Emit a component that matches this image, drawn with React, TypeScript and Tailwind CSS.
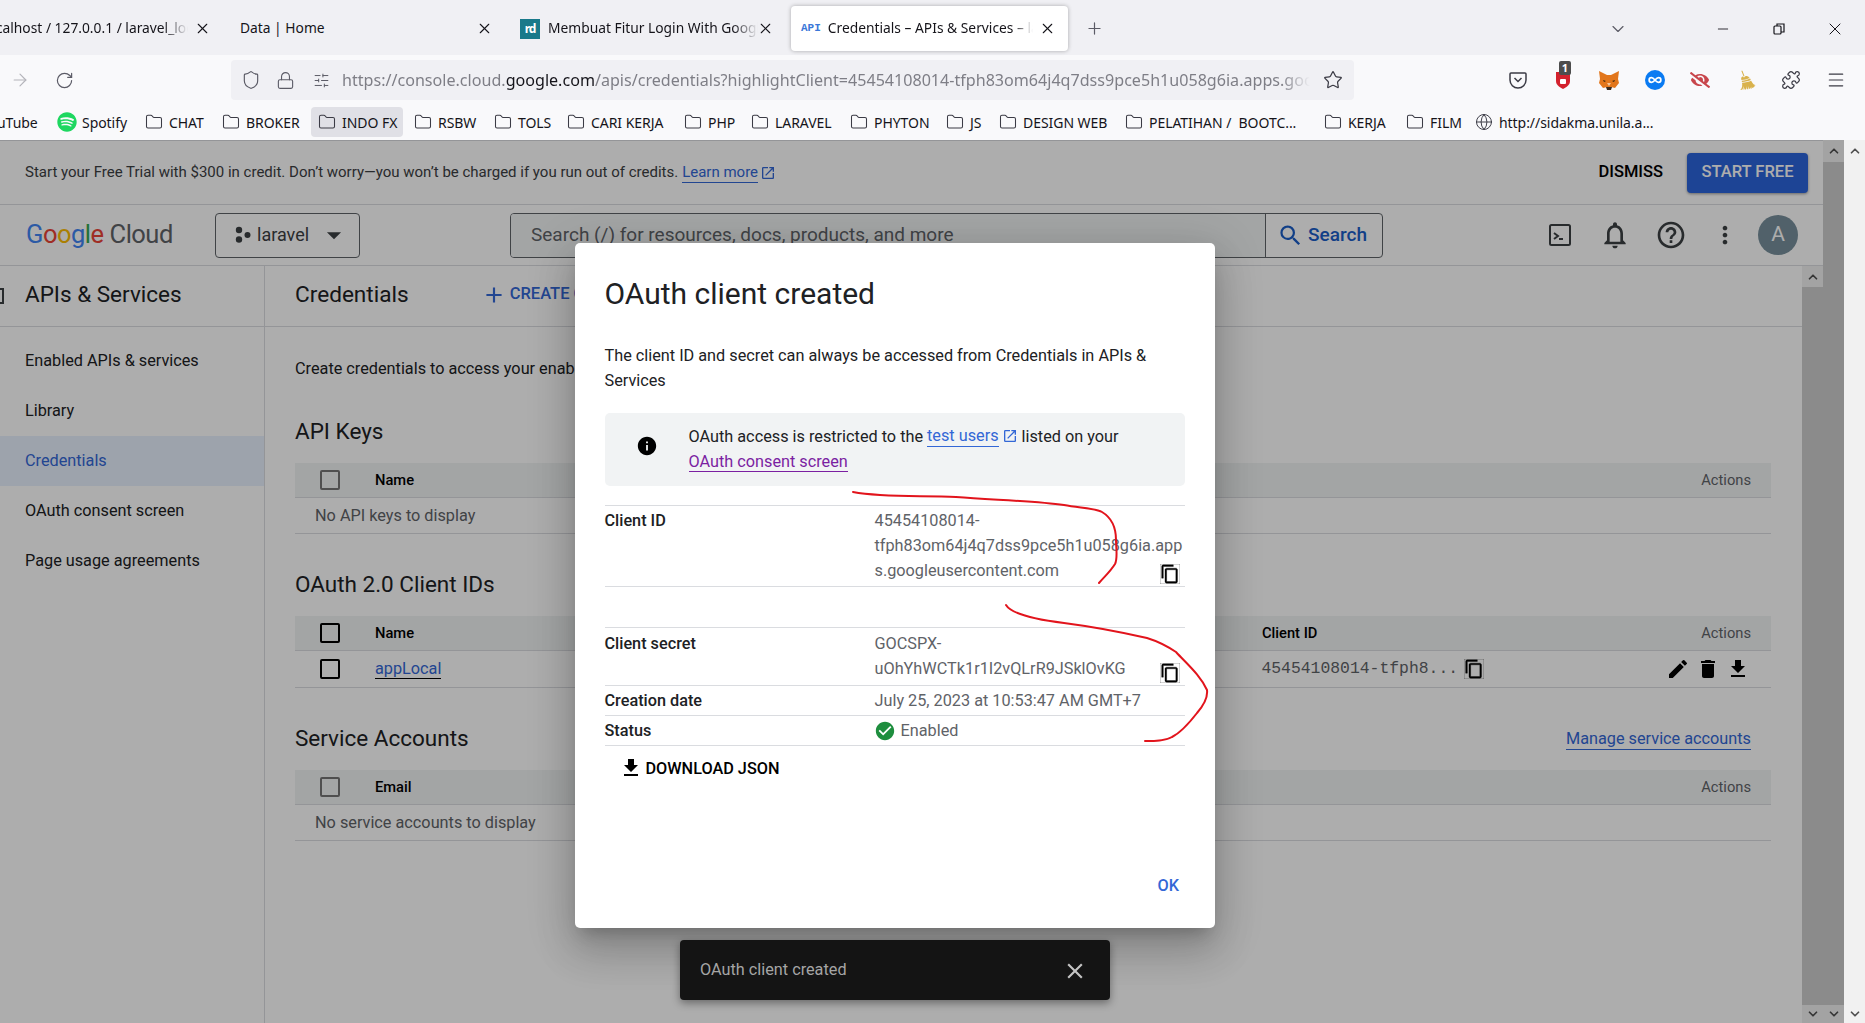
import React from 'react';
import {
  ArrowRight, ChevronDown, ChevronUp, Folder, Globe, Infinity as InfinityIcon, Lock, Menu, Minus, Plus, Puzzle,
  RotateCw, Shield, SlidersHorizontal, Star, X,
} from 'lucide-react';
import { FaSpotify, FaEyeSlash } from 'react-icons/fa';
import { GiBroom } from 'react-icons/gi';
import {
  MdAdd, MdArrowDropDown, MdCheckCircle, MdClose, MdContentCopy, MdDelete, MdEdit, MdFileDownload, MdHelpOutline,
  MdInfo, MdMoreVert, MdNotificationsNone, MdOpenInNew, MdSearch,
} from 'react-icons/md';

const bookmarks = [
  { name: 'CHAT', w: 77 },
  { name: 'BROKER', w: 89 },
  { name: 'INDO FX', w: 103, active: true },
  { name: 'RSBW', w: 80 },
  { name: 'TOLS', w: 73 },
  { name: 'CARI KERJA', w: 117 },
  { name: 'PHP', w: 67 },
  { name: 'LARAVEL', w: 99 },
  { name: 'PHYTON', w: 96 },
  { name: 'JS', w: 53 },
  { name: 'DESIGN WEB', w: 126 },
  { name: 'PELATIHAN /  BOOTC...', w: 199 },
  { name: 'KERJA', w: 82 },
  { name: 'FILM', w: 69 },
];

const sideItems = ['Enabled APIs & services', 'Library', 'Credentials', 'OAuth consent screen', 'Page usage agreements'];

const Tab: React.FC<{ w: number; close: number; children: React.ReactNode }> = ({ w, close, children }) => (
  <div className="relative flex h-[45px] shrink-0 items-center overflow-hidden" style={{ width: w }}>
    {children}
    <X className="absolute h-[17px] w-[17px] text-[#15141a]" style={{ left: close }} strokeWidth={1.5} />
  </div>
);

const Checkbox: React.FC<{ muted?: boolean }> = ({ muted }) => (
  <span className={`block h-5 w-5 rounded-[2px] border-2 ${muted ? 'border-[#757575]' : 'border-black'}`} />
);

const TableHead: React.FC<{ first: string; muted?: boolean; clientId?: boolean }> = ({ first, muted, clientId }) => (
  <div className="flex h-[35px] items-center border-b border-[#dadce0] bg-[#f1f3f4] pr-5 text-[14.7px] font-medium text-black">
    <span className="ml-[25px] mr-[35px]"><Checkbox muted={muted} /></span>
    <span>{first}</span>
    {clientId && <span className="ml-[848px]">Client ID</span>}
    <span className="ml-auto font-normal text-[#5f6368]">Actions</span>
  </div>
);

const Heading: React.FC<{ children: React.ReactNode }> = ({ children }) => (
  <h2 className="h-[30px] text-[22.5px] leading-[28px] text-[#202124]">{children}</h2>
);

const Row: React.FC<{ label: string; children: React.ReactNode; className?: string }> = ({ label, children, className }) => (
  <div className={`grid grid-cols-[270px_minmax(0,1fr)] border-t border-[#dadce0] ${className}`}>
    <div className="font-medium text-[#202124]">{label}</div>
    <div className="relative whitespace-nowrap text-[#5f6368]">{children}</div>
  </div>
);

const CopyBtn = () => <MdContentCopy className="absolute right-[5px] bottom-[2px] h-[20px] w-[20px] stroke-[0.4] text-black" />;

export default function App() {
  return (
    <div className="relative flex h-[1023px] w-[1865px] flex-col overflow-hidden bg-white font-['Roboto',sans-serif]">
      {/* browser tabs */}
      <div className="flex h-[55px] shrink-0 items-center bg-[#f0f0f4] pt-[2px] font-['Noto_Sans',sans-serif] text-[13.8px] text-[#15141a]">
        <Tab w={221} close={194}>
          <span className="ml-[-16px] w-[204px] overflow-hidden whitespace-nowrap [mask-image:linear-gradient(to_right,black_88%,transparent)]">localhost / 127.0.0.1 / laravel_login</span>
        </Tab>
        <Tab w={285} close={255}>
          <span className="ml-[19px]">Data | Home</span>
        </Tab>
        <Tab w={285} close={251}>
          <span className="ml-[14px] flex h-5 w-5 shrink-0 items-center justify-center bg-[#19798a] text-[12px] font-bold tracking-[-1px] text-white">rd</span>
          <span className="ml-2 w-[210px] overflow-hidden whitespace-nowrap [mask-image:linear-gradient(to_right,black_88%,transparent)]">Membuat Fitur Login With Google</span>
        </Tab>
        <div className="relative flex h-[45px] w-[277px] shrink-0 items-center overflow-hidden rounded-[4px] bg-white shadow-[0_0_4px_rgba(0,0,0,0.3)]">
          <span className="ml-[10px] font-['Liberation_Mono',monospace] text-[11px] font-bold text-[#3b78d8]">API</span>
          <span className="ml-[7px] w-[205px] overflow-hidden whitespace-nowrap [mask-image:linear-gradient(to_right,black_90%,transparent)]">Credentials – APIs &amp; Services – laravel</span>
          <X className="absolute left-[248px] h-[17px] w-[17px]" strokeWidth={1.5} />
        </div>
        <Plus className="ml-[17px] h-[19px] w-[19px] text-[#5b5b66]" strokeWidth={1.5} />
        <ChevronDown className="ml-[504px] h-[20px] w-[20px] text-[#5b5b66]" strokeWidth={1.4} />
        <Minus className="ml-[87px] h-[16px] w-[16px]" strokeWidth={1.3} />
        <svg className="ml-[40px] h-4 w-4" viewBox="0 0 16 16" fill="none" stroke="#15141a" strokeWidth="1.2">
          <rect x="3" y="5" width="7" height="8" rx="1" />
          <path d="M6 5V3h7v8h-3" />
        </svg>
        <X className="ml-[38px] h-[20px] w-[20px]" strokeWidth={1.2} />
      </div>

      {/* address bar */}
      <div className="flex h-[50px] shrink-0 items-center bg-[#f9f9fb] font-['Noto_Sans',sans-serif] text-[#5b5b66]">
        <ArrowRight className="ml-[10px] h-5 w-5 text-[#b4b4ba]" strokeWidth={1.4} />
        <RotateCw className="ml-[25px] h-[19px] w-[19px]" strokeWidth={1.5} />
        <div className="ml-[157px] flex h-[40px] w-[1123px] items-center rounded-[4px] bg-[#f0f0f4]">
          <Shield className="ml-[10px] h-[20px] w-[20px]" strokeWidth={1.4} />
          <Lock className="ml-[15px] h-[19px] w-[19px]" strokeWidth={1.4} />
          <SlidersHorizontal className="ml-[18px] h-[17px] w-[17px]" strokeWidth={1.4} />
          <div className="ml-[12px] w-[968px] overflow-hidden whitespace-nowrap pt-[1px] text-[16.1px] text-[#7e7e86] [mask-image:linear-gradient(to_right,black_97%,transparent)]">
            https://console.cloud.<span className="text-[#15141a]">google.com</span>/apis/credentials?highlightClient=45454108014-tfph83om64j4q7dss9pce5h1u058g6ia.apps.googleusercontent.com
          </div>
          <Star className="ml-[13px] h-[20px] w-[20px] text-[#3b3b45]" strokeWidth={1.5} />
        </div>
        <div className="ml-[154px] flex items-center gap-[25px]">
          <svg className="h-5 w-5" viewBox="0 0 20 20" fill="none" stroke="#3b3b45" strokeWidth="1.5">
            <path d="M3 3h14a1 1 0 0 1 1 1v6a8 8 0 0 1-16 0V4a1 1 0 0 1 1-1z" />
            <path d="M6.5 8l3.5 3.5L13.500 8" />
          </svg>
          <div className="relative h-5 w-5">
            <svg className="h-5 w-5" viewBox="0 0 20 20">
              <path d="M3 2h14v9c0 4-3.500 6-7 8-3.500-2-7-4-7-8z" fill="#d3212d" />
              <rect x="7" y="9" width="6" height="5" rx="1" fill="#fff" />
            </svg>
            <span className="absolute left-[6px] top-[-9px] flex h-[14px] w-[12px] items-center justify-center rounded-[2px] bg-[#4d4d4d] text-[11px] font-bold text-white">1</span>
          </div>
          <svg className="h-[22px] w-[22px]" viewBox="0 0 22 22">
            <path d="M1 2l8 4h4l8-4-1 8 1 4-4 5-4-1h-4l-4 1-4-5 1-4z" fill="#e2761b" />
            <path d="M8 18h6l-1 3H9z" fill="#3a2a1c" />
            <path d="M5 11l3 1-2 1zM17 11l-3 1 2 1z" fill="#33230f" />
            <path d="M9 14h4l-2 3z" fill="#f6c79a" />
          </svg>
          <span className="flex h-5 w-5 items-center justify-center rounded-full bg-[#0b7bf2]">
            <InfinityIcon className="h-[14px] w-[14px] text-white" strokeWidth={3} />
          </span>
          <FaEyeSlash className="h-5 w-5 text-[#c8464c]" />
          <GiBroom className="h-[21px] w-[21px] text-[#d9b24c]" />
          <Puzzle className="h-5 w-5 text-[#3b3b45]" strokeWidth={1.5} />
          <Menu className="h-5 w-5 text-[#3b3b45]" strokeWidth={1.4} />
        </div>
      </div>

      {/* bookmarks */}
      <div className="flex h-[35px] shrink-0 items-center overflow-hidden bg-[#f9f9fb] pb-[1px] font-['Noto_Sans',sans-serif] text-[14px] tracking-[-0.05px] text-[#15141a]">
        <span className="ml-[-3px] w-[60px] shrink-0">uTube</span>
        <span className="flex w-[88px] shrink-0 items-center gap-[5px]">
          <FaSpotify className="h-[20px] w-[20px] text-[#1ed760]" />Spotify
        </span>
        {bookmarks.map(b => (
          <span
            key={b.name}
            className={`flex h-[30px] shrink-0 items-center gap-[6px] whitespace-pre rounded-[4px] ${b.active ? 'bg-[#e0e0e6] pl-[7px]' : ''}`}
            style={{ width: b.w - (b.active ? 11 : 0), marginRight: b.active ? 11 : 0 }}
          >
            <Folder className="h-[18px] w-[18px] shrink-0 text-[#3b3b45]" strokeWidth={1.4} />
            {b.name}
          </span>
        ))}
        <span className="flex shrink-0 items-center gap-[6px]">
          <Globe className="h-[18px] w-[18px] text-[#3b3b45]" strokeWidth={1.3} />http://sidakma.unila.a...
        </span>
      </div>

      {/* page */}
      <div className="relative flex min-h-0 flex-1">
        <div className="flex min-w-0 flex-1">
          <div className="flex min-w-0 flex-1 flex-col border-t border-[#dadce0]">
            {/* trial banner */}
            <div className="flex h-[64px] shrink-0 items-center border-b border-[#dadce0] pl-[25px] pr-[15px] text-[15px] text-[#3c4043]">
              <span>Start your Free Trial with $300 in credit. Don’t worry—you won’t be charged if you run out of credits.</span>
              <span className="ml-[4px] border-b border-[#3367d6] leading-[19px] text-[#3367d6]">Learn more</span>
              <MdOpenInNew className="ml-[2px] h-4 w-4 text-[#3367d6]" />
              <span className="ml-auto text-[16.5px] font-medium text-black">DISMISS</span>
              <span className="ml-[24px] flex h-[40px] w-[121px] items-center justify-center rounded-[4px] bg-[#2c65dc] text-[16.5px] font-medium text-white shadow-[0_1px_3px_rgba(0,0,0,0.4)]">START FREE</span>
            </div>

            {/* cloud header */}
            <div className="flex h-[61px] shrink-0 items-center border-b border-[#dadce0]">
              <div className="ml-[26px] mb-[2px] flex w-[189px] text-[25.5px] leading-[30px] tracking-[-0.5px]">
                <span className="text-[#4285f4]">G</span><span className="text-[#ea4335]">o</span><span className="text-[#fbbc05]">o</span><span className="text-[#4285f4]">g</span><span className="text-[#34a853]">l</span><span className="mr-[6px] text-[#ea4335]">e</span><span className="text-[#5f6368]">Cloud</span>
              </div>
              <div className="flex h-[45px] w-[145px] items-center rounded-[4px] border border-[#5f6368] pb-[1px] pl-[18px] text-[18px] text-[#3c4043]">
                <svg className="h-[18px] w-[18px]" viewBox="0 0 18 18" fill="#3c4043">
                  <circle cx="5" cy="4" r="3.200" /><circle cx="5" cy="13.500" r="3.200" /><circle cx="13.500" cy="9" r="3" />
                </svg>
                <span className="ml-[5px]">laravel</span>
                <MdArrowDropDown className="ml-[8px] h-[34px] w-[34px] text-[#3c4043]" />
              </div>
              <div className="ml-[150px] flex h-[45px] w-[873px] overflow-hidden rounded-[4px] border border-[#5f6368]">
                <div className="flex flex-1 items-center bg-[#f1f3f4] pl-[20px] text-[19px] text-[#5f6368]">Search (/) for resources, docs, products, and more</div>
                <div className="flex w-[117px] items-center border-l border-[#5f6368] pl-[11px] text-[19px] font-medium text-[#1a5dc8]">
                  <MdSearch className="h-[27px] w-[27px]" /><span className="ml-[4px]">Search</span>
                </div>
              </div>
              <svg className="ml-[165px] h-[24px] w-[24px]" viewBox="0 0 24 24" fill="none" stroke="#3c4043" strokeWidth="2">
                <rect x="2" y="2" width="20" height="20" rx="1.500" />
                <path d="M6 10l4 3-4 3M11 16h4" />
              </svg>
              <MdNotificationsNone className="ml-[27px] h-[32px] w-[32px] text-[#3c4043]" />
              <MdHelpOutline className="ml-[24px] h-[32px] w-[32px] text-[#3c4043]" />
              <MdMoreVert className="ml-[24px] h-[28px] w-[28px] text-[#3c4043]" />
              <span className="ml-[19px] flex h-[40px] w-[40px] items-center justify-center rounded-full bg-[#78909c] text-[21px] text-white">A</span>
            </div>

            {/* body */}
            <div className="flex min-h-0 flex-1">
              <aside className="w-[265px] shrink-0 border-r border-[#dadce0]">
                <div className="relative flex h-[61px] items-center border-b border-[#dadce0] pb-[3px] pl-[25px] text-[22.5px] text-[#202124]">
                  <span className="absolute left-0 top-[22px] h-[16px] w-[4px] border-y-2 border-r-2 border-[#3c4043]" />
                  APIs &amp; Services
                </div>
                <nav className="pt-[9px] text-[16.25px] text-[#202124]">
                  {sideItems.map(item => (
                    <div key={item} className={`flex h-[50px] items-center pl-[25px] ${item === 'Credentials' ? 'bg-[#e8f0fe] text-[#3367d6]' : ''}`}>
                      {item}
                    </div>
                  ))}
                </nav>
              </aside>

              <main className="min-w-0 flex-1 text-[16.25px] text-[#202124]">
                <div className="flex h-[61px] items-center overflow-hidden whitespace-nowrap border-b border-[#dadce0] pb-[3px] pl-[30px]">
                  <span className="text-[22.6px]">Credentials</span>
                  <MdAdd className="ml-[72px] h-[26px] w-[26px] text-[#3367d6]" />
                  <span className="ml-[3px] text-[16.5px] font-medium text-[#3367d6]">CREATE CREDENTIALS</span>
                </div>
                <div className="pl-[30px] pr-[31px]">
                  <p className="mt-[30px] h-[24px] leading-[24px]">Create credentials to access your enabled APIs.</p>

                  <div className="mt-[36px]"><Heading>API Keys</Heading></div>
                  <div className="mt-[16px]"><TableHead first="Name" muted /></div>
                  <div className="flex h-[36px] items-center border-b border-[#dadce0] pl-[20px] pt-[1px] text-[#5f6368]">No API keys to display</div>

                  <div className="mt-[36px]"><Heading>OAuth 2.0 Client IDs</Heading></div>
                  <div className="mt-[16px]"><TableHead first="Name" clientId /></div>
                  <div className="flex h-[37px] items-center border-b border-[#dadce0]">
                    <span className="ml-[25px] mr-[35px]"><Checkbox /></span>
                    <span className="border-b border-black leading-[19px] text-[#3367d6]">appLocal</span>
                    <span className="ml-[820px] pt-[1px] font-['Liberation_Mono',monospace] text-[16.4px] text-[#5f6368]">45454108014-tfph8...</span>
                    <MdContentCopy className="ml-[6px] h-[20px] w-[20px] stroke-[0.4] text-black" />
                    <MdEdit className="ml-[182px] h-[24px] w-[24px] text-black" />
                    <MdDelete className="ml-[6px] h-[24px] w-[24px] text-black" />
                    <MdFileDownload className="ml-[6px] h-[24px] w-[24px] text-black" />
                  </div>

                  <div className="mt-[36px] flex items-center justify-between">
                    <Heading>Service Accounts</Heading>
                    <span className="mr-5 border-b border-[#3367d6] leading-[20px] text-[#3367d6]">Manage service accounts</span>
                  </div>
                  <div className="mt-[16px]"><TableHead first="Email" muted /></div>
                  <div className="flex h-[36px] items-center border-b border-[#dadce0] pl-[20px] pt-[1px] text-[#5f6368]">No service accounts to display</div>
                </div>
              </main>

              <div className="flex w-[21px] shrink-0 flex-col justify-between bg-[#cdcdcd]">
                <span className="flex h-[21px] items-center justify-center bg-[#f1f1f1]"><ChevronUp className="h-[14px] w-[14px] text-[#505050]" strokeWidth={3} /></span>
                <span className="flex h-[18px] items-center justify-center bg-[#f1f1f1]"><ChevronDown className="h-[14px] w-[14px] text-[#505050]" strokeWidth={3} /></span>
              </div>
            </div>
          </div>
          <div className="flex w-[21px] shrink-0 flex-col justify-between bg-[#cdcdcd]">
            <span className="flex h-[22px] items-center justify-center bg-[#f1f1f1]"><ChevronUp className="h-[14px] w-[14px] text-[#505050]" strokeWidth={3} /></span>
            <span className="flex h-[18px] items-center justify-center bg-[#f1f1f1]"><ChevronDown className="h-[14px] w-[14px] text-[#505050]" strokeWidth={3} /></span>
          </div>

          {/* dim layer */}
          <div className="absolute inset-y-0 left-0 w-[1844px] bg-black/32" />

          {/* dialog */}
          <div className="absolute left-[575px] top-[103px] flex h-[685px] w-[640px] flex-col rounded-[5px] bg-white pl-[29.500px] pr-[30px] text-[16.25px] leading-[25px] text-[#202124] shadow-[0_11px_15px_-7px_rgba(0,0,0,0.2),0_24px_38px_3px_rgba(0,0,0,0.14),0_9px_46px_8px_rgba(0,0,0,0.12)]">
            <h1 className="mt-[33px] h-[34px] text-[30px] leading-[36px]">OAuth client created</h1>
            <p className="mt-[33px]">The client ID and secret can always be accessed from Credentials in APIs &amp; Services</p>
            <div className="mt-[20px] flex h-[73px] items-center rounded-[5px] bg-[#f1f3f4]">
              <MdInfo className="ml-[31px] mb-[8px] h-[22px] w-[22px] text-black" />
              <div className="ml-[31px] mb-[2px]">
                <div className="flex items-center">
                  OAuth access is restricted to the
                  <span className="ml-[4px] border-b border-[#3367d6] leading-[21px] text-[#3367d6]">test users</span>
                  <MdOpenInNew className="ml-[3px] h-[16px] w-[16px] text-[#3367d6]" />
                  <span className="ml-[4px]">listed on your</span>
                </div>
                <div><span className="border-b border-[#7b1fa2] text-[#7b1fa2]">OAuth consent screen</span></div>
              </div>
            </div>

            <div className="mt-[19px]">
              <Row label="Client ID" className="h-[82px] border-b pt-[2px]">
                45454108014-<br />tfph83om64j4q7dss9pce5h1u058g6ia.app<br />s.googleusercontent.com
                <CopyBtn />
              </Row>
              <Row label="Client secret" className="mt-[40px] h-[58px] pt-[3px]">
                GOCSPX-<br />uOhYhWCTk1r1I2vQLrR9JSklOvKG
                <CopyBtn />
              </Row>
              <Row label="Creation date" className="h-[30px] items-center">July 25, 2023 at 10:53:47 AM GMT+7</Row>
              <Row label="Status" className="h-[31px] items-center border-b">
                <span className="flex items-center">
                  <MdCheckCircle className="mr-[5px] ml-[-1px] h-[22px] w-[22px] text-[#1e8e3e]" />Enabled
                </span>
              </Row>
            </div>
            <div className="mt-[8px] flex h-[28px] items-center pl-[14px] font-medium text-black">
              <MdFileDownload className="h-[24px] w-[24px]" />
              <span className="ml-[3px]">DOWNLOAD JSON</span>
            </div>
            <div className="mt-auto mb-[30px] flex justify-end pr-[6px] font-medium text-[#3367d6]">OK</div>
          </div>

          {/* snackbar */}
          <div className="absolute left-[680px] top-[800px] flex h-[60px] w-[430px] items-center justify-between rounded-[4px] bg-[#141414] pl-[20px] pr-[22px] pt-[1px] text-[16.25px] text-[#a5a5a5] shadow-[0_3px_8px_rgba(0,0,0,0.4)]">
            OAuth client created
            <MdClose className="h-[26px] w-[26px] text-[#c4c4c4]" />
          </div>
        </div>

        <div className="flex w-[21px] shrink-0 flex-col justify-between bg-[#f1f1f1]">
          <span className="flex h-[22px] items-center justify-center"><ChevronUp className="h-[14px] w-[14px] text-[#505050]" strokeWidth={3} /></span>
          <span className="flex h-[18px] items-center justify-center"><ChevronDown className="h-[14px] w-[14px] text-[#505050]" strokeWidth={3} /></span>
        </div>
      </div>

      {/* red pen marks */}
      <svg className="pointer-events-none absolute left-0 top-0 h-[1023px] w-[1865px]" viewBox="0 0 1865 1023" fill="none" stroke="#e2141c" strokeWidth="2" strokeLinecap="round">
        <path d="M853 492C885 498 925 495 956 497C995 500 1035 501 1064 505C1080 508 1095 508 1102 512C1112 518 1116 528 1116 540C1116 548 1118 558 1115 564C1110 572 1104 577 1099 583" />
        <path d="M1006 605C1012 615 1040 620 1064 623C1095 627 1125 633 1147 638C1160 642 1170 648 1176 652C1188 665 1200 675 1207 690C1208 698 1204 705 1197 713C1190 722 1180 733 1172 737C1165 741 1155 741 1145 741" />
      </svg>
    </div>
  );
}
